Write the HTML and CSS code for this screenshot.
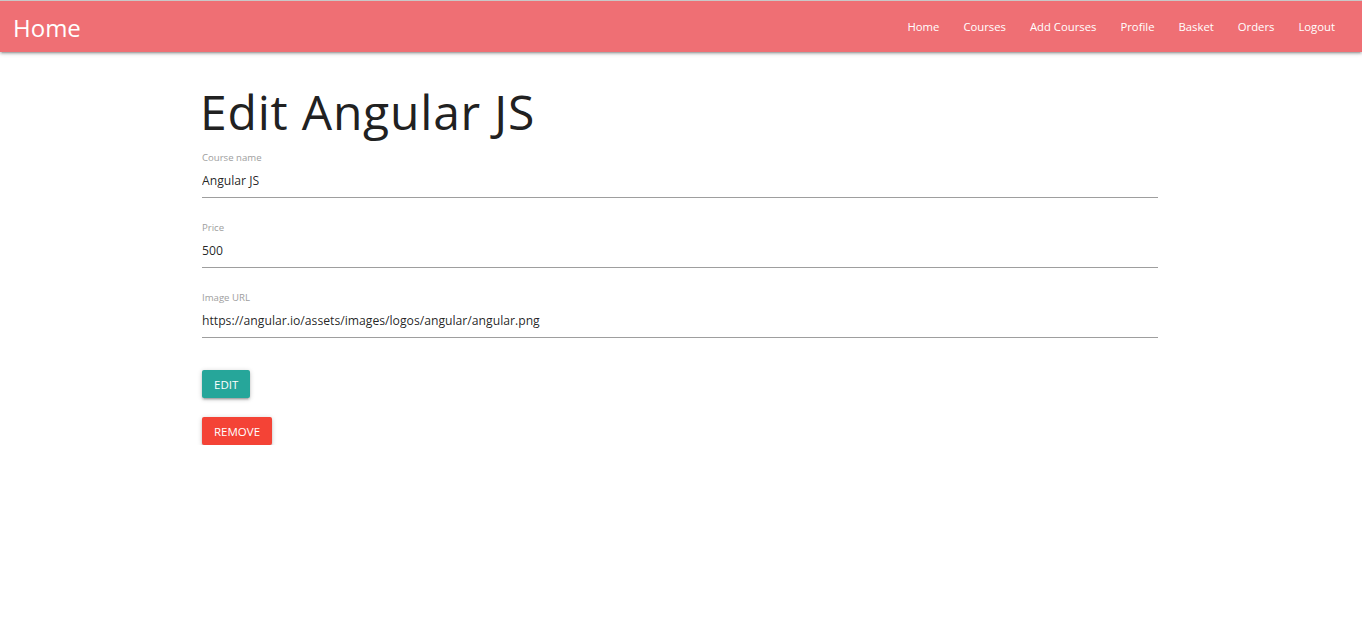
FILE: index.html
```html
<!DOCTYPE html>
<html>
<head>
<meta charset="utf-8">
<title>Edit Angular JS</title>
<link rel="stylesheet" href="styles.css">
</head>
<body>
<nav class="navbar">
  <a class="brand" href="#">Home</a>
  <ul class="nav-links">
    <li><a href="#">Home</a></li>
    <li><a href="#">Courses</a></li>
    <li><a href="#">Add Courses</a></li>
    <li><a href="#">Profile</a></li>
    <li><a href="#">Basket</a></li>
    <li><a href="#">Orders</a></li>
    <li><a href="#">Logout</a></li>
  </ul>
</nav>
<main class="container">
  <h2 class="title">Edit Angular JS</h2>
  <form class="form">
    <div class="field">
      <label class="field-label">Course name</label>
      <input class="field-input" type="text" value="Angular JS">
    </div>
    <div class="field">
      <label class="field-label">Price</label>
      <input class="field-input" type="text" value="500">
    </div>
    <div class="field">
      <label class="field-label">Image URL</label>
      <input class="field-input" type="text" value="https://angular.io/assets/images/logos/angular/angular.png">
    </div>
    <div class="actions">
      <button type="button" class="btn btn-edit">Edit</button>
      <button type="button" class="btn btn-remove">Remove</button>
    </div>
  </form>
</main>
</body>
</html>
```

FILE: styles.css
```css
* { box-sizing: border-box; }
html, body { margin: 0; padding: 0; }
body {
  font-family: "Open Sans", "Noto Sans", sans-serif;
  color: rgba(0,0,0,0.87);
  background: #fff;
}
.navbar {
  display: flex;
  align-items: center;
  justify-content: space-between;
  height: 52px;
  border-top: 1px solid #c8c8c8;
  background: #ef6f74;
  padding: 0 15px 0 13px;
  box-shadow: 0 2px 2px 0 rgba(0,0,0,0.14), 0 3px 1px -2px rgba(0,0,0,0.12), 0 1px 5px 0 rgba(0,0,0,0.2);
}
.brand {
  color: #fff;
  text-decoration: none;
  font-size: 24px;
  line-height: 51px;
  margin-top: 2px;
}
.nav-links {
  display: flex;
  list-style: none;
  margin: 0;
  padding: 0;
}
.nav-links a {
  display: block;
  color: #fff;
  text-decoration: none;
  font-size: 11.3px;
  padding: 0 12px;
  line-height: 51px;
}
.container {
  width: 956px;
  margin: 0 0 0 calc(50% - 479px);
  padding-top: 32px;
}
.title {
  font-size: 48px;
  letter-spacing: 0.8px;
  font-weight: 400;
  line-height: 56px;
  margin: 0 0 12px -2px;
  color: #212121;
}
.form { margin: 0; }
.field {
  display: flex;
  flex-direction: column;
  margin-bottom: 24px;
}
.field-label {
  font-size: 9.6px;
  line-height: 12px;
  color: #9e9e9e;
}
.field-input {
  font-family: inherit;
  font-size: 12.2px;
  height: 34px;
  border: none;
  border-bottom: 1px solid #9e9e9e;
  padding: 0;
  outline: none;
  color: rgba(0,0,0,0.87);
  background: transparent;
}
.actions {
  display: flex;
  flex-direction: column;
  align-items: flex-start;
  gap: 19px;
  padding-top: 8px;
}
.btn {
  font-family: inherit;
  height: 28px;
  padding: 0 12px;
  border: none;
  border-radius: 2px;
  color: #fff;
  font-size: 11.5px;
  text-transform: uppercase;
  box-shadow: 0 2px 2px 0 rgba(0,0,0,0.14), 0 3px 1px -2px rgba(0,0,0,0.12), 0 1px 5px 0 rgba(0,0,0,0.2);
  cursor: pointer;
}
.btn-edit { background: #26a69a; }
.btn-remove { background: #f44336; }
```
